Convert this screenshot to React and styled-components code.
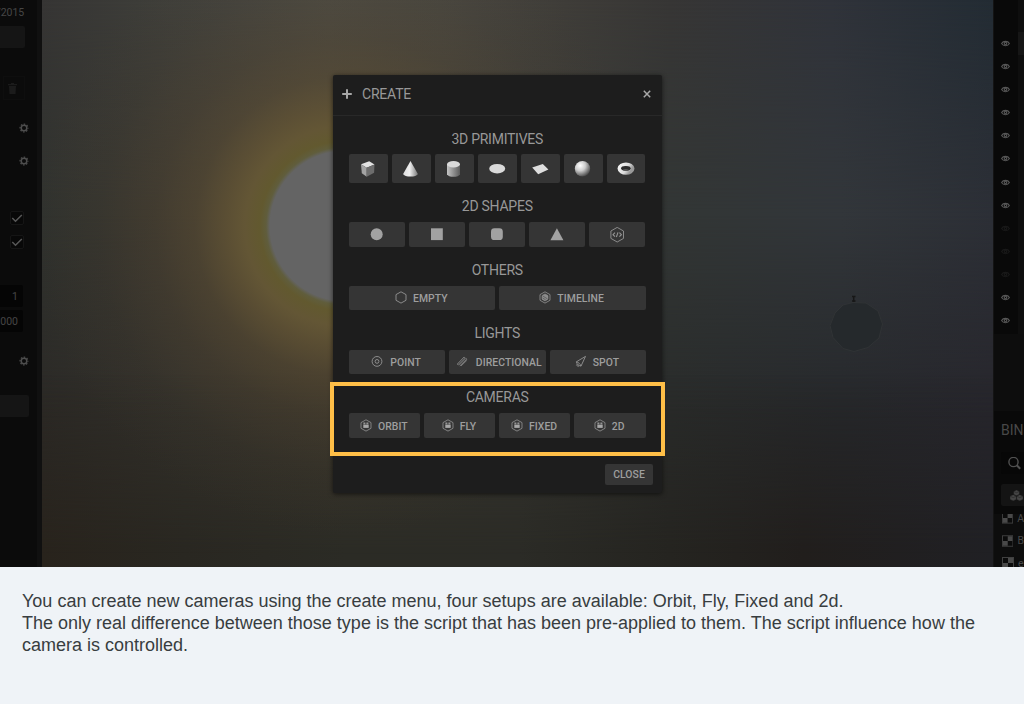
import React from "react";
import styled, { createGlobalStyle, css } from "styled-components";

const Global = createGlobalStyle`
  * { box-sizing: border-box; }
  html, body { margin: 0; padding: 0; }
  body { background: #eff3f7; overflow: hidden; }
`;

const Page = styled.div`
  width: 1024px;
  height: 704px;
  display: flex;
  flex-direction: column;
  font-family: Roboto, sans-serif;
`;

const Editor = styled.div`
  position: relative;
  display: flex;
  height: 567px;
  background: #0b0b0b;
  overflow: hidden;
`;

/* ---------- left side panel ---------- */

const Inspector = styled.aside`
  width: 42px;
  flex: none;
  display: flex;
  flex-direction: column;
  align-items: flex-start;
  background: #0b0b0b;
  border-right: 5px solid #101010;
  color: #464646;
  font-size: 10.5px;
  overflow: hidden;
`;

const DateText = styled.div`
  width: 24px;
  height: 14px;
  margin-top: 6px;
  line-height: 14px;
  letter-spacing: -0.1px;
  display: flex;
  justify-content: flex-end;
  white-space: nowrap;
`;

const Slot = styled.div`
  width: ${(p) => p.$w || 25}px;
  height: 22px;
  margin-top: ${(p) => p.$top || 0}px;
  background: ${(p) => (p.$dark ? "#050505" : "#151515")};
  border-radius: 0 2px 2px 0;
  display: flex;
  align-items: center;
  justify-content: flex-end;
  padding-right: 5px;
`;

const TrashSlot = styled.div`
  width: 22px;
  height: 24px;
  margin: 28px 0 0 3px;
  border: 1px solid #0e0e0e;
  display: flex;
  align-items: center;
  justify-content: center;
  padding-right: 3px;
`;

const GearRow = styled.div`
  height: 10px;
  margin: ${(p) => p.$top}px 0 0 19px;
  display: flex;
`;

const CheckBox = styled.div`
  width: 14px;
  height: 14px;
  margin: ${(p) => p.$top}px 0 0 10px;
  border: 1px solid #151515;
  border-radius: 2px;
  background: #080808;
  display: flex;
`;

/* ---------- 3D viewport ---------- */

const Viewport = styled.main`
  position: relative;
  flex: 1;
  overflow: hidden;
  background: linear-gradient(90deg, #363534, #3d3d39 10%, #4e4c44 30%, #4a4841 42%, #3f3d39 55%, #373635 66%, #30333a 83%, #232c34);
`;

const band = css`
  content: "";
  position: absolute;
  inset: 0;
`;

const Haze = styled.div`
  position: absolute;
  inset: 0;
  &::before {
    ${band}
    background: linear-gradient(90deg, #30322e, #38362f 9%, #413c31 18%, #4b4332 28%, #403e36 50%, #323635 66%, #32363a 84%, #2c2f36);
    mask-image: linear-gradient(180deg, transparent, #000 38%);
  }
  &::after {
    ${band}
    background: linear-gradient(90deg, #2b2926, #33312b 15%, #3c372c 30%, #34332d 50%, #292b2a 66%, #26282b 84%, #27262c);
    mask-image: linear-gradient(180deg, transparent 38%, #000 74%);
  }
`;

const Floor = styled.div`
  position: absolute;
  inset: 0;
  background: linear-gradient(90deg, #28231c, #292721 15%, #2b2b25 32%, #2b2b26 50%, #252420 66%, #211e1c 80%, #202024);
  mask-image: linear-gradient(180deg, transparent 66%, #000 98%);
`;

const Sun = styled.div`
  position: absolute;
  left: -17px;
  top: -94px;
  width: 640px;
  height: 640px;
  background: radial-gradient(
    circle,
    #646464 75px,
    #605d3c 79px,
    #62592f 85px,
    #635635 100px,
    rgba(96, 82, 52, 0.8) 120px,
    rgba(86, 73, 50, 0.55) 150px,
    rgba(78, 66, 48, 0.34) 190px,
    rgba(70, 60, 46, 0.13) 245px,
    rgba(64, 58, 48, 0) 310px
  );
`;

const Planet = styled.svg`
  position: absolute;
  left: 784px;
  top: 292px;
`;

/* ---------- right side panel ---------- */

const Outliner = styled.aside`
  width: 31px;
  flex: none;
  display: flex;
  flex-direction: column;
  background: #0d0d0d;
  border-left: 1px solid #141414;
  color: #484848;
  overflow: hidden;
`;

const TreeList = styled.div`
  height: 334px;
  padding-top: 32px;
  display: flex;
  flex-direction: column;
  background: linear-gradient(90deg, #090909 24px, #0e0e0e 24px);
`;

const TreeRow = styled.div`
  height: 23.08px;
  flex: none;
  padding-left: 7px;
  display: flex;
  align-items: center;
  color: ${(p) => (p.$off ? "#191919" : "#575757")};
  background: linear-gradient(90deg, transparent 24px, ${(p) => (p.$selected ? "#161616" : "transparent")} 24px);
`;

const Bin = styled.section`
  height: 103px;
  margin-top: 77px;
  padding: 10px 0 0 7px;
  background: #090909;
  display: flex;
  flex-direction: column;
`;

const BinTitle = styled.div`
  height: 18px;
  font-size: 14px;
  color: #484848;
  line-height: 18px;
  white-space: nowrap;
`;

const BinField = styled.div`
  height: 22px;
  flex: none;
  margin-top: ${(p) => p.$top}px;
  padding-left: ${(p) => p.$pad}px;
  background: ${(p) => (p.$raised ? "#141414" : "#070707")};
  border-radius: 2px 0 0 2px;
  display: flex;
  align-items: center;
`;

const AssetList = styled.div`
  height: 53px;
  overflow: hidden;
`;

const AssetRow = styled.div`
  height: 22.5px;
  padding-left: 8px;
  display: flex;
  align-items: center;
  gap: 4px;
  font-size: 10.5px;
  transform: translateY(-7px);
`;

/* ---------- create dialog ---------- */

const Dialog = styled.div`
  position: absolute;
  left: 333px;
  top: 75px;
  width: 329px;
  height: 418px;
  display: flex;
  flex-direction: column;
  background: #1d1d1d;
  border-radius: 2px;
  box-shadow: 0 1px 5px rgba(0, 0, 0, 0.6);
  color: #a2a2a2;
`;

const DialogHeader = styled.header`
  height: 41px;
  flex: none;
  display: flex;
  align-items: center;
  padding: 0 11px 2px 9px;
  border-bottom: 1px solid #282828;
`;

const DialogTitle = styled.h1`
  flex: 1;
  margin: 0 0 0 10px;
  color: #989898;
  font-size: 14px;
  font-weight: 400;
  letter-spacing: -0.2px;
  line-height: 18px;
`;

const DialogBody = styled.div`
  flex: 1;
  display: flex;
  flex-direction: column;
  padding: 0 16.5px 0 16px;
`;

const SectionTitle = styled.h2`
  height: 20px;
  margin: ${(p) => p.$top}px 0 0;
  color: #989898;
  font-size: 14px;
  font-weight: 400;
  letter-spacing: -0.25px;
  line-height: 20px;
  text-align: center;
`;

const ButtonRow = styled.div`
  display: flex;
  gap: 4px;
  height: ${(p) => p.$h}px;
  margin-top: ${(p) => p.$top}px;
`;

const Button = styled.button`
  flex: 1 1 0;
  min-width: 0;
  height: 100%;
  padding: 0;
  border: 0;
  border-radius: 2px;
  background: #353535;
  color: #9e9e9e;
  font: 500 10.4px/14px Roboto, sans-serif;
  letter-spacing: 0.06px;
  white-space: nowrap;
  display: flex;
  align-items: center;
  justify-content: center;
  gap: ${(p) => p.$gap || 6}px;
  & > svg { flex: none; display: block; }
  & > span { position: relative; top: 1px; }
`;

const TextButton = styled(Button)`
  padding-right: ${(p) => p.$right}px;
  padding-left: ${(p) => p.$left}px;
`;

const DialogFooter = styled.footer`
  display: flex;
  justify-content: flex-end;
  padding: 0 9px 8px 0;
`;

const CloseButton = styled(Button)`
  flex: none;
  width: 48px;
  height: 21px;
  padding-top: 1px;
`;

const Highlight = styled.div`
  position: absolute;
  left: 330px;
  top: 382px;
  width: 335px;
  height: 74px;
  border: 4px solid #ffbf47;
`;

/* ---------- caption ---------- */

const Caption = styled.p`
  flex: 1;
  margin: 0;
  padding: 23px 22px 0;
  background: #eff3f7;
  color: #383d40;
  font: 18px/22px "Liberation Sans", Arial, sans-serif;
  white-space: nowrap;
`;

/* ---------- drawings ---------- */

const Gear = () => (
  <svg width="10" height="10" viewBox="0 0 10 10" fill="none" stroke="#4d4d4d">
    <circle cx="5" cy="5" r="2.8" strokeWidth="1.5" />
    <circle cx="5" cy="5" r="3.9" strokeWidth="1.3" strokeDasharray="1.55 1.513" strokeDashoffset=".77" />
  </svg>
);

const Check = () => (
  <svg width="12" height="12" viewBox="0 0 12 12" fill="none" stroke="#585858" strokeWidth="1.5">
    <path d="M1.3 6 4.5 9.2 10.8 3" />
  </svg>
);

const Trash = () => (
  <svg width="9" height="11" viewBox="0 0 9 11" fill="#1b1b1b">
    <path d="M0 1h3V0h3v1h3v1.3H0zM1 3h7l-.5 8h-6z" />
  </svg>
);

const Eye = () => (
  <svg width="9" height="7" viewBox="0 0 9 7" fill="none" stroke="currentColor">
    <path d="M.6 3.5C2.2.6 6.8.6 8.4 3.5 6.8 6.4 2.2 6.4.6 3.5Z" strokeWidth="1.1" />
    <circle cx="4.5" cy="3.5" r="1.2" strokeWidth="1.1" />
  </svg>
);

const Search = () => (
  <svg width="13" height="13" viewBox="0 0 13 13" fill="none" stroke="#505050" strokeWidth="1.4">
    <circle cx="5.5" cy="5" r="4.6" />
    <path d="m8.8 8.3 3.4 3.4" strokeWidth="2" />
  </svg>
);

const Cubes = () => (
  <svg width="13" height="11" viewBox="0 0 13 11" fill="#454545" stroke="#141414" strokeWidth=".4">
    <path d="m6.5 0 2.9 1.2v3.2L6.5 5.7 3.6 4.4V1.2zM3.2 4.7l3.2 1.3v3.4L3.2 10.9 0 9.4V6zM9.8 4.7 13 6v3.4l-3.2 1.5-3.2-1.5V6z" />
    <path d="m3.9 1.5 2.6 1.2 2.6-1.2M.3 6.3l2.9 1.3 2.9-1.3M6.9 6.3l2.9 1.3 2.9-1.3" fill="none" />
  </svg>
);

const Checker = () => (
  <svg width="12" height="12" viewBox="0 0 12 12">
    <rect x=".5" y=".5" width="11" height="11" fill="#0b0b0b" stroke="#404040" />
    <path d="M6 1h5v5H6zM1 6h5v5H1z" fill="#494949" />
  </svg>
);

const Plus = () => (
  <svg width="10" height="10" viewBox="0 0 10 10" stroke="#a6a6a6" strokeWidth="2">
    <path d="M5 .2v9.6M.2 5h9.6" />
  </svg>
);

const Cross = () => (
  <svg width="8" height="8" viewBox="0 0 8 8" stroke="#a8a8a8" strokeWidth="1.5">
    <path d="m.8.8 6.4 6.4M7.2.8.8 7.2" />
  </svg>
);

const Solid = ({ kind }) => (
  <svg width="18" height="18" viewBox="0 0 18 18">
    <defs>
      <linearGradient id="side" x1="0" x2="1">
        <stop offset="0" stopColor="#c4c4c4" />
        <stop offset="1" stopColor="#5b5b5b" />
      </linearGradient>
      <linearGradient id="cone" x1="0" x2="1">
        <stop offset="0" stopColor="#dedede" />
        <stop offset=".45" stopColor="#eeeeee" />
        <stop offset="1" stopColor="#777" />
      </linearGradient>
      <radialGradient id="ball" cx=".35" cy=".3" r=".75">
        <stop offset="0" stopColor="#fff" />
        <stop offset=".45" stopColor="#ccc" />
        <stop offset="1" stopColor="#444" />
      </radialGradient>
      <linearGradient id="ring" x1="0" x2="1" y2=".4">
        <stop offset="0" stopColor="#f4f4f4" />
        <stop offset=".65" stopColor="#dadada" />
        <stop offset="1" stopColor="#999" />
      </linearGradient>
    </defs>
    {kind === "cube" && (
      <>
        <path d="m2 4.2 8.2-3 5.3 3.2-7.8 3.4z" fill="#e2e2e2" />
        <path d="m2 4.2 5.7 3.6v9L2.8 13.2z" fill="#a3a3a3" />
        <path d="m7.7 7.8 7.8-3.4-.4 8.4-7.4 4z" fill="#6d6d6d" />
      </>
    )}
    {kind === "cone" && <path d="M8.5 1 1.1 14c1.2 3.4 13.6 3.4 14.8 0z" fill="url(#cone)" />}
    {kind === "cylinder" && (
      <>
        <path d="M2 4v10.3c1 3.4 12 3.4 13 0V4z" fill="url(#side)" />
        <ellipse cx="8.5" cy="4.2" rx="6.5" ry="3.2" fill="#dadada" />
      </>
    )}
    {kind === "disc" && <ellipse cx="9.2" cy="8.7" rx="8" ry="4.8" fill="#dadada" />}
    {kind === "plane" && <path d="M1.2 7.6 11.8 4l5.6 5.6L7.2 14.2z" fill="#dedede" />}
    {kind === "sphere" && <circle cx="8.5" cy="8.7" r="7.7" fill="url(#ball)" />}
    {kind === "torus" && (
      <>
        <ellipse cx="9" cy="8.6" rx="6.5" ry="4.1" fill="none" stroke="url(#ring)" strokeWidth="4" />
        <ellipse cx="8.8" cy="8.3" rx="4.7" ry="2.3" fill="#2c2c2c" />
        <path d="M5.4 9.9c1.8-.9 4.8-.8 6.6 0-1.5.8-5 .9-6.600 0z" fill="#6b6b6b" />
      </>
    )}
  </svg>
);

const Shape = ({ kind }) => (
  <svg width="16" height="16" viewBox="0 0 16 16" fill="#a2a2a2">
    {kind === "circle" && <circle cx="7.7" cy="7.2" r="6" />}
    {kind === "square" && <rect x="2" y="1.3" width="11.8" height="11.8" />}
    {kind === "rounded" && <rect x="2" y="1.3" width="11.8" height="11.8" rx="3.4" />}
    {kind === "triangle" && <path d="M7.9 1.3 14.4 13.2H1.4z" />}
    {kind === "code" && (
      <g fill="none" stroke="#949494">
        <path d="M8.2.4 14.500 4v7.4L8.2 15 1.900 11.4V4z" strokeWidth=".9" />
        <path d="M6 5.700 4 7.700l2 2M10.400 5.700l2 2-2 2M9 5.400 7.400 10" strokeWidth="1.1" />
      </g>
    )}
  </svg>
);

const HEX = "M6 .6 11 3.4v5.7L6 11.9 1 9.1V3.4z";

const Glyph = ({ kind }) => (
  <svg width="12" height="14" viewBox="0 -.2 12 14" fill="none" stroke="#949494" strokeWidth=".9">
    {kind === "empty" && <path d={HEX} />}
    {kind === "timeline" && (
      <>
        <path d={HEX} strokeWidth=".8" />
        <path d="m6 2.7 3 1.7v3.6L6 9.8 3 8V4.4z" fill="#8c8c8c" strokeWidth=".6" />
        <path d="m3.5 4.6 5 3.1M3.5 6.7l3.2 2" stroke="#3b3b3b" strokeWidth=".5" />
      </>
    )}
    {kind === "camera" && (
      <>
        <path d={HEX} strokeWidth=".8" />
        <path d="M3.3 5.5h5.4v3.2H3.3z" fill="#a8a8a8" stroke="none" />
        <path d="M3.400 3.3h2v1.900h-2zM6.400 3.3h2v1.900h-2z" fill="#949494" stroke="none" />
      </>
    )}
    {kind === "point" && (
      <>
        <circle cx="6" cy="6.2" r="4.9" />
        <circle cx="6" cy="6.2" r="1.9" />
      </>
    )}
    {kind === "directional" && (
      <path d="M1.3 8.8 8 1.8l.9.8-7 7zM3 10.1l7-7 .8.9-6.9 7M5 10.8 10.8 5.2" strokeWidth=".7" />
    )}
    {kind === "spot" && (
      <path d="M10.5 1.2 1.4 6.6c.5 2.4 2 3.8 4.6 4.3zM1.4 6.6c1.8.4 4.1 2.2 4.6 4.3M2.3 9l-.8 1 1.7 1.2.8-.8" strokeWidth=".9" />
    )}
  </svg>
);

const treeRows = [1, 1, 1, 1, 1, 1, 1, 1, 0, 0, 0, 1, 1];
const solids = ["cube", "cone", "cylinder", "disc", "plane", "sphere", "torus"];
const shapes = ["circle", "square", "rounded", "triangle", "code"];

const LabelButton = ({ icon, gap, left = 0, right = 1.5, children }) => (
  <TextButton $gap={gap} $left={left} $right={right}>
    <Glyph kind={icon} />
    <span>{children}</span>
  </TextButton>
);

export default function App() {
  return (
    <Page>
      <Global />
      <Editor>
        <Inspector>
          <DateText>/2015</DateText>
          <Slot $top={6} />
          <TrashSlot><Trash /></TrashSlot>
          <GearRow $top={23}><Gear /></GearRow>
          <GearRow $top={23}><Gear /></GearRow>
          <CheckBox $top={45}><Check /></CheckBox>
          <CheckBox $top={10}><Check /></CheckBox>
          <Slot $top={36} $w={23} $dark>1</Slot>
          <Slot $top={3} $w={23} $dark>000</Slot>
          <GearRow $top={24}><Gear /></GearRow>
          <Slot $top={29} $w={29} />
        </Inspector>

        <Viewport>
          <Haze />
          <Floor />
          <Sun />
          <Planet width="60" height="64" viewBox="0 0 60 64">
            <path
              d="M27 10.5 40 11l12 8 4.5 13-3.5 14-11 9.500-14 4-11-3-10-11-3-12L9 21l8-8z"
              fill="#25292c"
              stroke="#303335"
            />
            <path d="M26 4.5h3.5M27.7 4v6M26 9h3.5" stroke="#171717" strokeWidth="1.5" />
          </Planet>
        </Viewport>

        <Outliner>
          <TreeList>
            {treeRows.map((on, i) => (
              <TreeRow key={i} $off={!on} $selected={i === 0}><Eye /></TreeRow>
            ))}
          </TreeList>
          <Bin>
            <BinTitle>BIN</BinTitle>
            <BinField $top={13} $pad={6.5}><Search /></BinField>
            <BinField $top={10} $pad={9} $raised><Cubes /></BinField>
          </Bin>
          <AssetList>
            <AssetRow><Checker />A</AssetRow>
            <AssetRow><Checker />B</AssetRow>
            <AssetRow><Checker />e</AssetRow>
          </AssetList>
        </Outliner>

        <Dialog>
          <DialogHeader>
            <Plus />
            <DialogTitle>CREATE</DialogTitle>
            <Cross />
          </DialogHeader>
          <DialogBody>
            <SectionTitle $top={13}>3D PRIMITIVES</SectionTitle>
            <ButtonRow $h={29} $top={5}>
              {solids.map((k) => <Button key={k}><Solid kind={k} /></Button>)}
            </ButtonRow>
            <SectionTitle $top={13}>2D SHAPES</SectionTitle>
            <ButtonRow $h={25} $top={6}>
              {shapes.map((k) => <Button key={k}><Shape kind={k} /></Button>)}
            </ButtonRow>
            <SectionTitle $top={13}>OTHERS</SectionTitle>
            <ButtonRow $h={24} $top={6}>
              <LabelButton icon="empty">EMPTY</LabelButton>
              <LabelButton icon="timeline">TIMELINE</LabelButton>
            </ButtonRow>
            <SectionTitle $top={13}>LIGHTS</SectionTitle>
            <ButtonRow $h={24} $top={7}>
              <LabelButton icon="point" gap={7}>POINT</LabelButton>
              <LabelButton icon="directional" gap={8} left={3} right={0}>DIRECTIONAL</LabelButton>
              <LabelButton icon="spot" gap={6}>SPOT</LabelButton>
            </ButtonRow>
            <SectionTitle $top={13}>CAMERAS</SectionTitle>
            <ButtonRow $h={25} $top={6}>
              <LabelButton icon="camera">ORBIT</LabelButton>
              <LabelButton icon="camera">FLY</LabelButton>
              <LabelButton icon="camera">FIXED</LabelButton>
              <LabelButton icon="camera">2D</LabelButton>
            </ButtonRow>
          </DialogBody>
          <DialogFooter>
            <CloseButton>CLOSE</CloseButton>
          </DialogFooter>
        </Dialog>
        <Highlight />
      </Editor>
      <Caption>
        You can create new cameras using the create menu, four setups are available: Orbit, Fly, Fixed and 2d.<br />
        The only real difference between those type is the script that has been pre-applied to them. The script influence how the<br />
        camera is controlled.
      </Caption>
    </Page>
  );
}
